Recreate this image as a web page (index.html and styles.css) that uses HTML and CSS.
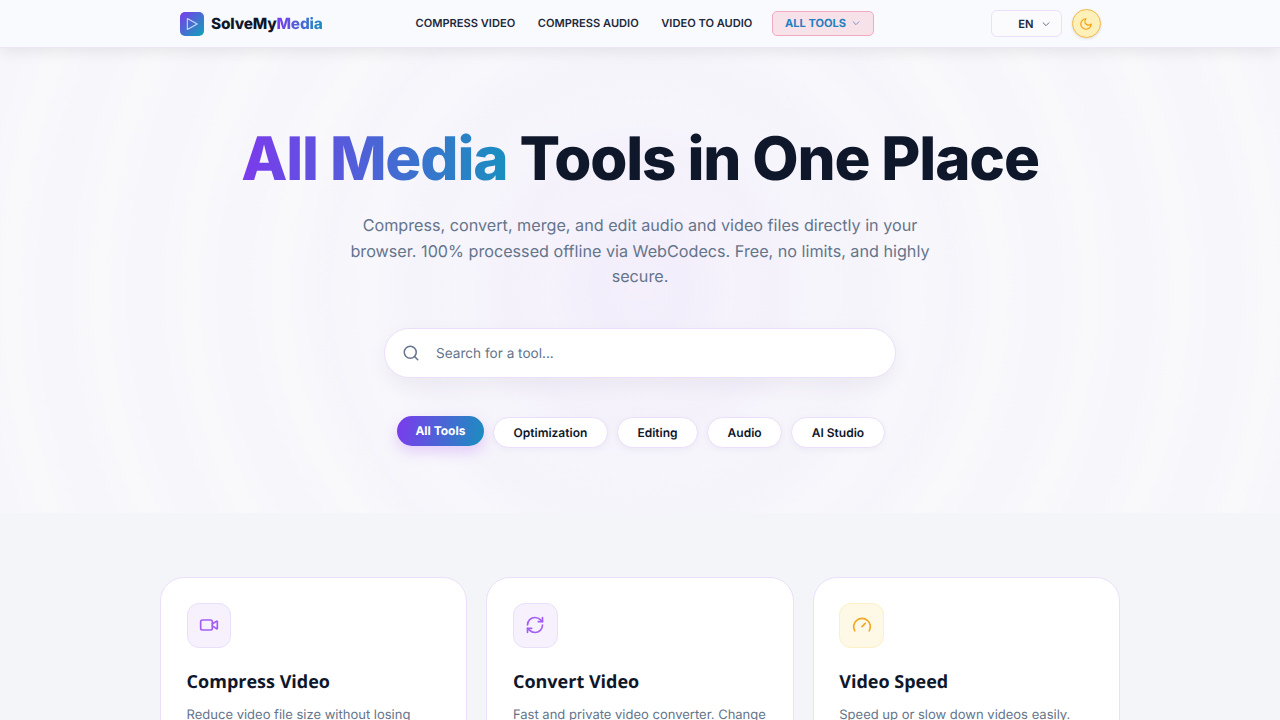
FILE: index.html
```html
<!DOCTYPE html>
<html lang="en">
<head>
    <meta charset="UTF-8">
    <meta name="viewport" content="width=device-width, initial-scale=1.0">
    <title>SolveMyMedia</title>
    <link rel="stylesheet" href="styles.css">
</head>
<body>

    <header class="topbar">
        <div class="topbar-inner">
            <a class="logo" href="#">
                <span class="logo-mark">
                    <svg width="14" height="14" viewBox="0 0 24 24" fill="none" stroke="#fff" stroke-opacity="0.75" stroke-width="1.8" stroke-linejoin="round"><path d="M4 2.5v19l17-9.5z"/></svg>
                </span>
                <span class="logo-text">SolveMy<span class="grad-text">Media</span></span>
            </a>
            <nav class="main-nav">
                <a href="#">Compress Video</a>
                <a href="#">Compress Audio</a>
                <a href="#">Video to Audio</a>
                <button class="all-tools-btn">
                    <span>All Tools</span>
                    <svg width="10" height="10" viewBox="0 0 24 24" fill="none" stroke="#7c93c9" stroke-width="2.4" stroke-linecap="round" stroke-linejoin="round"><path d="m5 9 7 7 7-7"/></svg>
                </button>
            </nav>
            <div class="topbar-right">
                <button class="lang-btn">
                    <span>EN</span>
                    <svg width="10" height="10" viewBox="0 0 24 24" fill="none" stroke="#64748b" stroke-width="2.4" stroke-linecap="round" stroke-linejoin="round"><path d="m5 9 7 7 7-7"/></svg>
                </button>
                <button class="theme-btn">
                    <svg width="14" height="14" viewBox="0 0 24 24" fill="none" stroke="#f59e0b" stroke-width="2" stroke-linecap="round" stroke-linejoin="round"><path d="M12 3a6 6 0 0 0 9 9 9 9 0 1 1-9-9Z"/></svg>
                </button>
            </div>
        </div>
    </header>

    <section class="hero">
        <h1><span class="grad-text">All Media</span> Tools in One Place</h1>
        <p class="hero-sub">Compress, convert, merge, and edit audio and video files directly in your browser. 100% processed offline via WebCodecs. Free, no limits, and highly secure.</p>
        <div class="search-box">
            <svg width="18" height="18" viewBox="0 0 24 24" fill="none" stroke="#64748b" stroke-width="2" stroke-linecap="round" stroke-linejoin="round"><circle cx="11" cy="11" r="8"/><path d="m21 21-4.3-4.3"/></svg>
            <input type="text" placeholder="Search for a tool...">
        </div>
        <div class="filter-row">
            <button class="pill active">All Tools</button>
            <button class="pill">Optimization</button>
            <button class="pill">Editing</button>
            <button class="pill">Audio</button>
            <button class="pill">AI Studio</button>
        </div>
    </section>

    <section class="tools">
        <div class="tool-grid">
            <article class="tool-card">
                <div class="tool-icon">
                    <svg width="20" height="20" viewBox="0 0 24 24" fill="none" stroke="#a35ff5" stroke-width="2" stroke-linecap="round" stroke-linejoin="round"><path d="m16 13 5.223 3.482a.5.5 0 0 0 .777-.416V7.87a.5.5 0 0 0-.752-.432L16 10.5"/><rect x="2" y="6" width="14" height="12" rx="2"/></svg>
                </div>
                <h2>Compress Video</h2>
                <p>Reduce video file size without losing quality.</p>
            </article>
            <article class="tool-card">
                <div class="tool-icon">
                    <svg width="20" height="20" viewBox="0 0 24 24" fill="none" stroke="#a35ff5" stroke-width="2" stroke-linecap="round" stroke-linejoin="round"><path d="M3 12a9 9 0 0 1 9-9 9.75 9.75 0 0 1 6.74 2.74L21 8"/><path d="M21 3v5h-5"/><path d="M21 12a9 9 0 0 1-9 9 9.75 9.75 0 0 1-6.74-2.74L3 16"/><path d="M8 16H3v5"/></svg>
                </div>
                <h2>Convert Video</h2>
                <p>Fast and private video converter. Change formats in seconds.</p>
            </article>
            <article class="tool-card">
                <div class="tool-icon icon-amber">
                    <svg width="20" height="20" viewBox="0 0 24 24" fill="none" stroke="#f0a825" stroke-width="2" stroke-linecap="round" stroke-linejoin="round"><path d="m12 14 4-4"/><path d="M3.34 19a10 10 0 1 1 17.32 0"/></svg>
                </div>
                <h2>Video Speed</h2>
                <p>Speed up or slow down videos easily.</p>
            </article>
        </div>
    </section>

</body>
</html>
```

FILE: styles.css
```css
:root {
    --dark: #0f172a;
    --muted: #64748b;
    --line: #ecdffb;
    --grad: linear-gradient(135deg, #7c3aed, #0ea5b7);
}

* {
    box-sizing: border-box;
}

html, body {
    margin: 0;
    padding: 0;
    height: 720px;
    overflow: hidden;
}

body {
    font-family: 'Inter', sans-serif;
    background-color: #f4f5f8;
    color: var(--dark);
    text-rendering: geometricPrecision;
}

button, input {
    text-rendering: geometricPrecision;
}

button {
    font-family: inherit;
    cursor: pointer;
}

.grad-text {
    background: linear-gradient(90deg, #7c3aed, #1a8fbf);
    -webkit-background-clip: text;
    background-clip: text;
    color: transparent;
}

/* Top bar */
.topbar {
    position: relative;
    z-index: 2;
    height: 48px;
    background-color: #f9fafd;
    border-bottom: 1px solid #ece6f5;
    box-shadow: 0 4px 14px rgba(0, 0, 0, 0.08);
}

.topbar-inner {
    display: flex;
    align-items: center;
    width: 921px;
    height: 47px;
    margin: 0 auto;
}

.logo {
    display: flex;
    align-items: center;
    gap: 7.5px;
    width: 236px;
    text-decoration: none;
    color: var(--dark);
}

.logo-mark {
    display: flex;
    align-items: center;
    justify-content: center;
    width: 24px;
    height: 24px;
    border-radius: 5px;
    background: var(--grad);
}

.logo-text {
    font-size: 15.4px;
    font-weight: 800;
    letter-spacing: -0.2px;
}

.main-nav {
    display: flex;
    align-items: center;
    gap: 22.6px;
}

.main-nav a {
    margin-top: -1px;
    font-size: 11.1px;
    font-weight: 600;
    text-transform: uppercase;
    text-decoration: none;
    color: #1e293b;
}

.all-tools-btn {
    display: flex;
    align-items: center;
    gap: 5px;
    height: 25px;
    margin-left: -3px;
    padding: 0 12px 1px;
    font-size: 11.1px;
    font-weight: 700;
    text-transform: uppercase;
    color: #1f7fbf;
    background-color: #f8e2ea;
    border: 1px solid #f3a9c0;
    border-radius: 5px;
}

.topbar-right {
    display: flex;
    align-items: center;
    gap: 10px;
    margin-left: auto;
}

.lang-btn {
    display: flex;
    align-items: center;
    justify-content: flex-end;
    gap: 7px;
    width: 71px;
    height: 27px;
    padding: 0 10px 0 0;
    font-size: 11.2px;
    font-weight: 600;
    color: #1e293b;
    background-color: #fbfbfe;
    border: 1px solid var(--line);
    border-radius: 6px;
}

.theme-btn {
    display: flex;
    align-items: center;
    justify-content: center;
    width: 29px;
    height: 29px;
    padding: 0;
    background-color: #fdf0b8;
    border: 1px solid #f5b84a;
    border-radius: 50%;
    box-shadow: 0 1px 3px rgba(0, 0, 0, 0.1);
}

/* Hero */
.hero {
    display: flex;
    flex-direction: column;
    align-items: center;
    height: 465px;
    padding-top: 75px;
    background-color: #f9f9fc;
    background-image:
        radial-gradient(circle at 50% 52%, rgba(168, 85, 247, 0.06) 0, rgba(168, 85, 247, 0.03) 130px, rgba(168, 85, 247, 0) 340px),
        repeating-radial-gradient(circle at 50% 52%, rgba(140, 120, 200, 0) 0, rgba(140, 120, 200, 0.022) 45px, rgba(140, 120, 200, 0) 90px);
}

.hero h1 {
    margin: 0;
    font-size: 60px;
    line-height: 72px;
    font-weight: 800;
    letter-spacing: -1.13px;
    color: var(--dark);
}

.hero-sub {
    width: 600px;
    margin: 18px 0 0;
    font-size: 16.18px;
    line-height: 25.6px;
    text-align: center;
    color: var(--muted);
}

.search-box {
    display: flex;
    align-items: center;
    gap: 16px;
    width: 512px;
    height: 50px;
    margin-top: 38.5px;
    padding: 0 17px;
    background-color: #fff;
    border: 1px solid var(--line);
    border-radius: 25px;
    box-shadow: 0 8px 20px rgba(60, 50, 90, 0.06);
}

.search-box input {
    flex: 1;
    border: none;
    outline: none;
    background: none;
    padding: 1px 0 0;
    font-family: inherit;
    font-size: 13.6px;
    color: var(--dark);
}

.search-box input::placeholder {
    color: var(--muted);
    opacity: 1;
}

.filter-row {
    display: flex;
    align-items: center;
    gap: 9.1px;
    margin-top: 39px;
    margin-left: 1.5px;
}

.pill {
    height: 31px;
    padding: 0 19.5px;
    font-size: 12px;
    font-weight: 600;
    color: var(--dark);
    background-color: #fff;
    border: 1px solid var(--line);
    border-radius: 16px;
    box-shadow: 0 2px 6px rgba(60, 50, 90, 0.05);
}

.pill.active {
    height: 30px;
    margin-top: -3px;
    padding: 0 18.5px 2px;
    font-weight: 700;
    color: #fff;
    background: linear-gradient(100deg, #7c3aed, #1a8fbf);
    border: none;
    box-shadow: 0 6px 14px rgba(168, 85, 247, 0.25);
}

/* Tool cards */
.tools {
    padding-top: 64px;
}

.tool-grid {
    display: grid;
    grid-template-columns: repeat(3, 1fr);
    gap: 19px;
    width: 960px;
    margin: 0 auto;
}

.tool-card {
    height: 260px;
    padding: 25px 25.6px;
    background-color: #fff;
    border: 1px solid var(--line);
    border-radius: 24px;
}

.tool-icon {
    display: flex;
    align-items: center;
    justify-content: center;
    width: 44.8px;
    height: 44.8px;
    background-color: #f6f1fd;
    border: 1px solid #eadffb;
    border-radius: 12px;
}

.tool-icon.icon-amber {
    background-color: #fef9e7;
    border-color: #fdf0c4;
}

.tool-card h2 {
    margin: 21px 0 0;
    font-family: 'Open Sans', sans-serif;
    font-size: 18px;
    line-height: 26px;
    font-weight: 700;
    color: var(--dark);
}

.tool-card p {
    margin: 9px 0 0;
    font-size: 13px;
    line-height: 22px;
    color: var(--muted);
}
```
